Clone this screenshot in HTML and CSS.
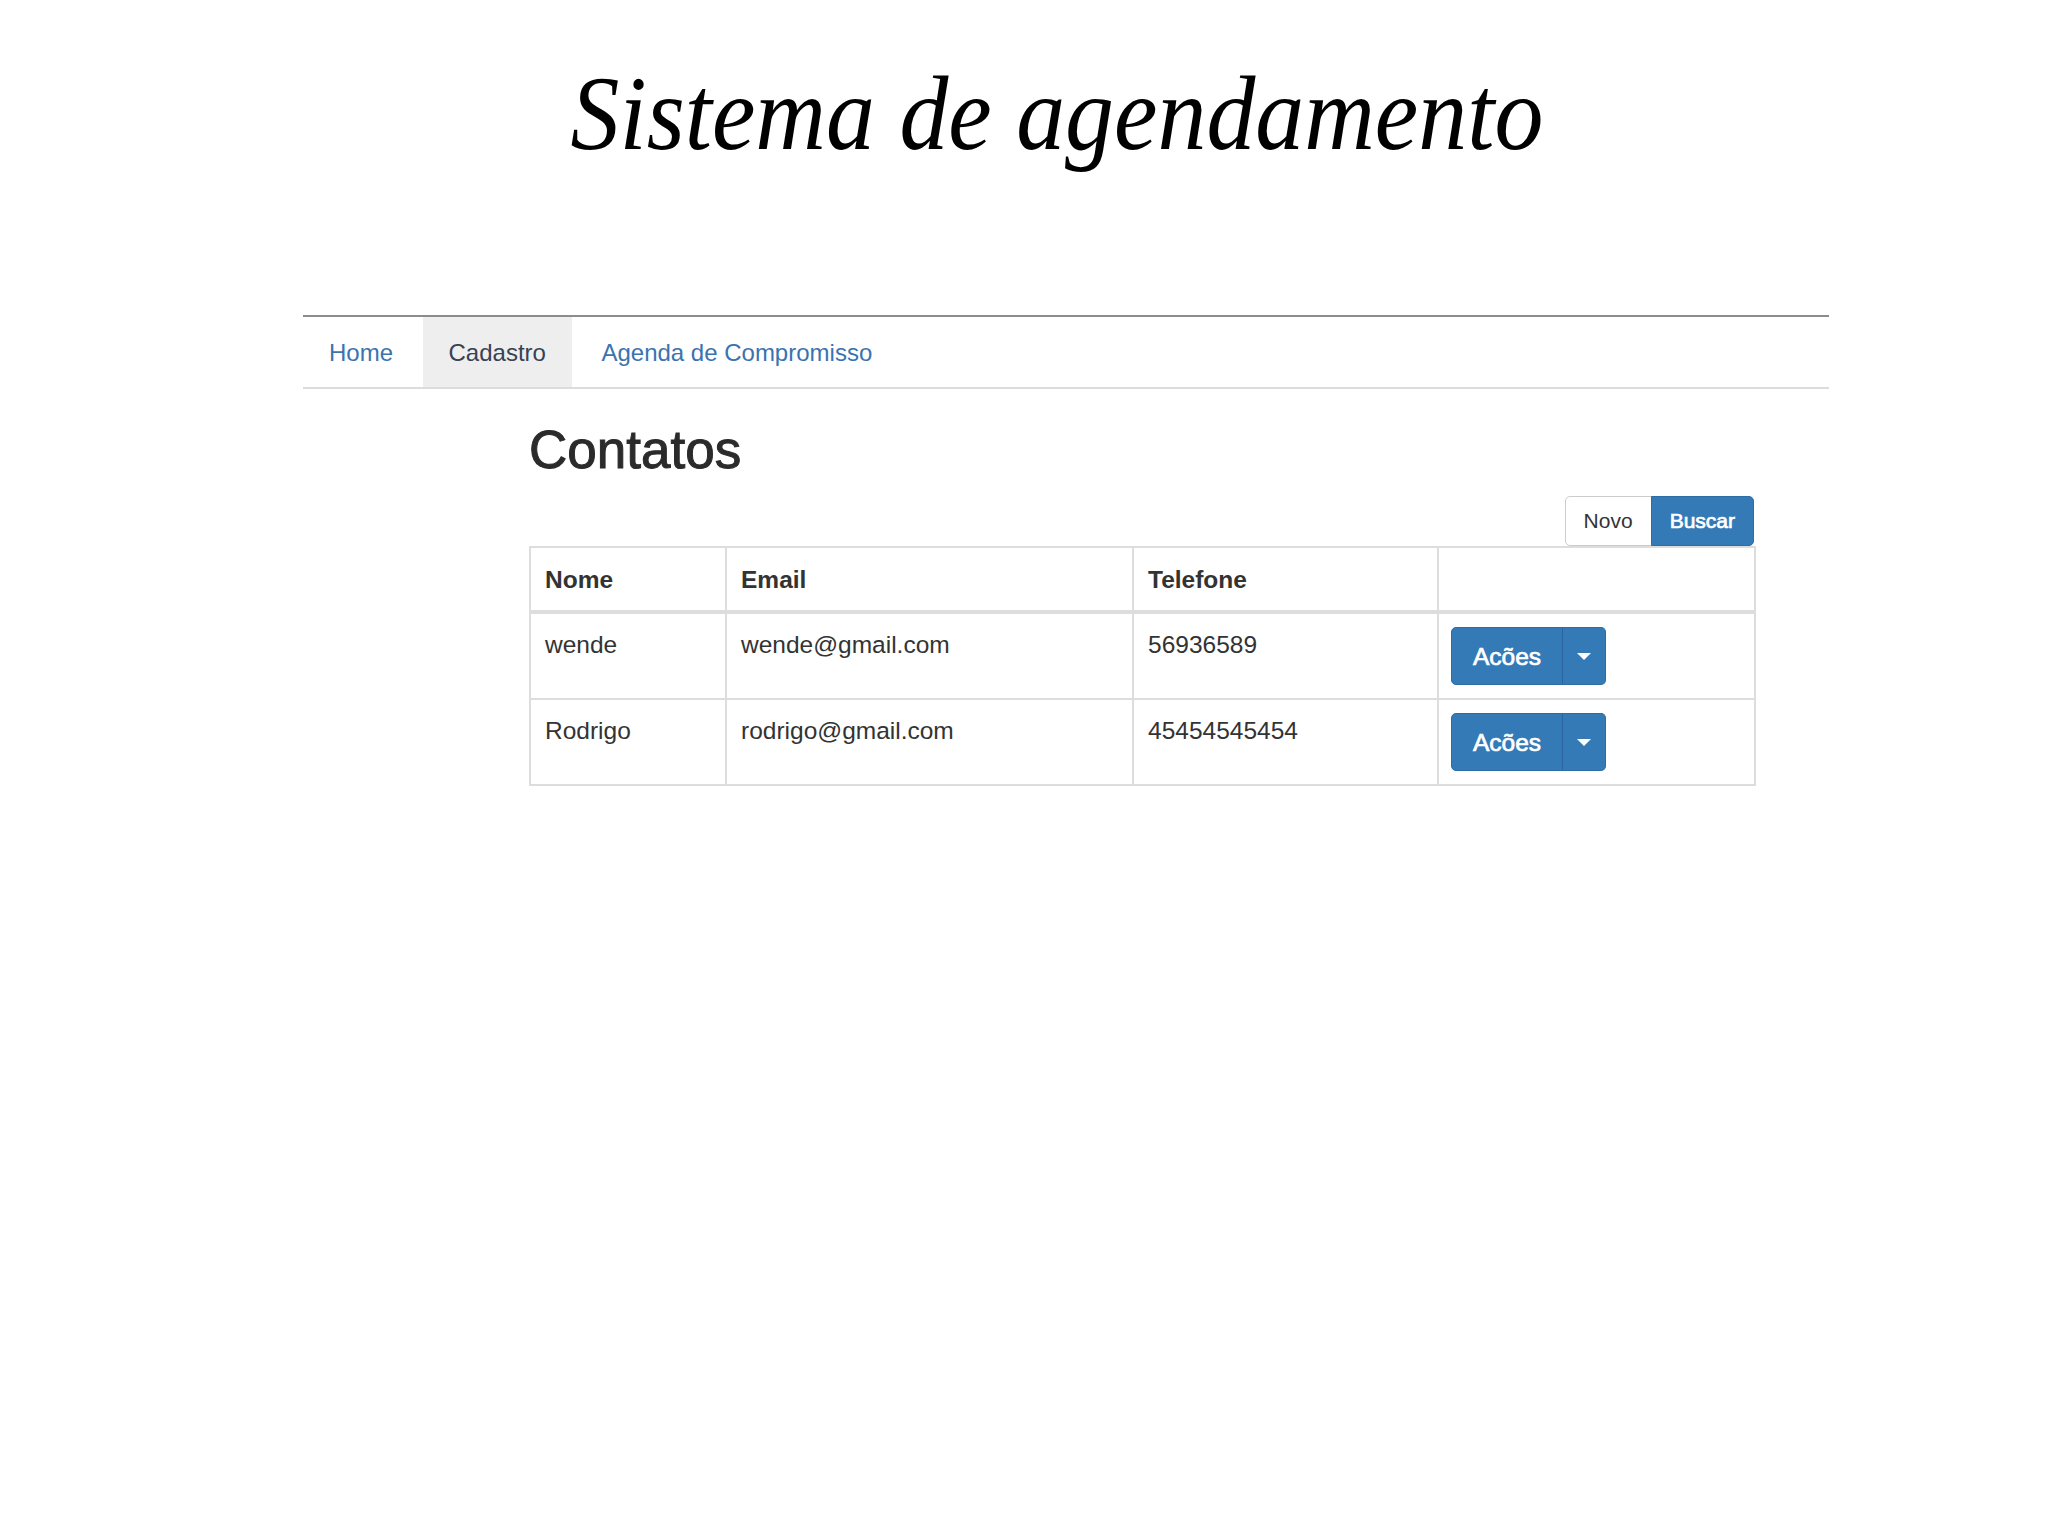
FILE: index.html
```html
<!DOCTYPE html>
<html lang="pt">
<head>
<meta charset="utf-8">
<title>Sistema de agendamento</title>
<link rel="stylesheet" href="styles.css">
</head>
<body>
<header class="title-wrap">
  <h1 class="title">Sistema de agendamento</h1>
</header>
<nav class="nav-wrap">
  <ul class="tabs">
    <li class="tab"><a href="#">Home</a></li>
    <li class="tab active"><a href="#">Cadastro</a></li>
    <li class="tab"><a href="#">Agenda de Compromisso</a></li>
  </ul>
</nav>
<main class="content">
  <h2 class="heading">Contatos</h2>
  <div class="toolbar">
    <div class="btn-group">
      <button class="btn btn-default btn-sm">Novo</button>
      <button class="btn btn-primary btn-sm">Buscar</button>
    </div>
  </div>
  <table class="grid">
    <colgroup>
      <col class="c-nome"><col class="c-email"><col class="c-tel"><col class="c-acoes">
    </colgroup>
    <thead>
      <tr><th>Nome</th><th>Email</th><th>Telefone</th><th></th></tr>
    </thead>
    <tbody>
      <tr>
        <td>wende</td><td>wende@gmail.com</td><td>56936589</td>
        <td><div class="split"><button class="btn btn-primary split-main">Acões</button><button class="btn btn-primary split-caret"><span class="caret"></span></button></div></td>
      </tr>
      <tr>
        <td>Rodrigo</td><td>rodrigo@gmail.com</td><td>45454545454</td>
        <td><div class="split"><button class="btn btn-primary split-main">Acões</button><button class="btn btn-primary split-caret"><span class="caret"></span></button></div></td>
      </tr>
    </tbody>
  </table>
</main>
</body>
</html>
```
FILE: styles.css
```css
* { box-sizing: border-box; }
html, body { margin: 0; padding: 0; background: #fff; }
body {
  font-family: "Liberation Sans", Arial, Helvetica, sans-serif;
  font-size: 24.5px;
  line-height: 35px;
  color: #333;
}
.title-wrap {
  padding-top: 61px;
  padding-left: 66px;
  height: 315px;
  text-align: center;
}
.title {
  display: inline-block;
  margin: 0;
  font-family: "Liberation Serif", "Times New Roman", serif;
  font-style: italic;
  font-weight: normal;
  font-size: 106px;
  line-height: 1;
  color: #000;
  transform: scaleX(0.923);
  transform-origin: center;
}
.nav-wrap {
  margin-left: 303px;
  width: 1526px;
  border-top: 2px solid #8c8c8c;
}
.tabs {
  list-style: none;
  margin: 0;
  padding: 0;
  display: flex;
  border-bottom: 2px solid #dcdcdc;
  font-size: 24px;
}
.tab { margin-right: 3.5px; }
.tab a {
  display: block;
  padding: 17.5px 26px;
  color: #3a73b0;
  text-decoration: none;
}
.tab.active a {
  background: #eeeeee;
  color: #364255;
}
.content {
  margin-left: 529px;
  width: 1225px;
}
.heading {
  margin: 32px 0 0;
  font-size: 53px;
  line-height: 1.1;
  font-weight: normal;
  color: #2b2b2b;
  -webkit-text-stroke: 1px #2b2b2b;
}
.toolbar {
  display: flex;
  justify-content: flex-end;
  margin-top: 17px;
}
.btn-group { display: flex; }
.btn {
  font-family: inherit;
  margin: 0;
  border: 1px solid transparent;
  cursor: pointer;
}
.btn-sm {
  height: 50px;
  padding: 0 18px;
  font-size: 21px;
  line-height: 48px;
}
.btn-default {
  background: #fff;
  border-color: #cccccc;
  color: #333;
  border-radius: 5px 0 0 5px;
}
.btn-primary {
  background: #337ab7;
  border-color: #2e6da4;
  color: #fff;
  -webkit-text-stroke: 0.7px #fff;
}
.btn-group .btn-primary { border-radius: 0 5px 5px 0; margin-left: -1px; }
.grid {
  width: 1225px;
  table-layout: fixed;
  border-collapse: collapse;
  border: 2px solid #dddddd;
}
.c-nome { width: 196px; }
.c-email { width: 407px; }
.c-tel { width: 305px; }
.c-acoes { width: 317px; }
.grid th, .grid td {
  border: 2px solid #dddddd;
  padding: 13px 14px;
  text-align: left;
  vertical-align: top;
  line-height: 35px;
}
.grid th {
  font-weight: bold;
  border-bottom: 4px solid #dddddd;
  padding-top: 13.5px;
  padding-bottom: 13.5px;
}
.grid td:last-child { padding-left: 12px; }
.split { display: flex; }
.split-main {
  font-size: 24.5px;
  line-height: 35px;
  padding: 10.5px 21px;
  border-radius: 5px 0 0 5px;
}
.split-caret {
  padding: 10.5px 14px;
  border-radius: 0 5px 5px 0;
  margin-left: -1px;
  border-left-color: #2a65a0;
  display: flex;
  align-items: center;
}
.caret {
  display: block;
  width: 0;
  height: 0;
  border-top: 7px solid #fff;
  border-left: 7px solid transparent;
  border-right: 7px solid transparent;
}
```
